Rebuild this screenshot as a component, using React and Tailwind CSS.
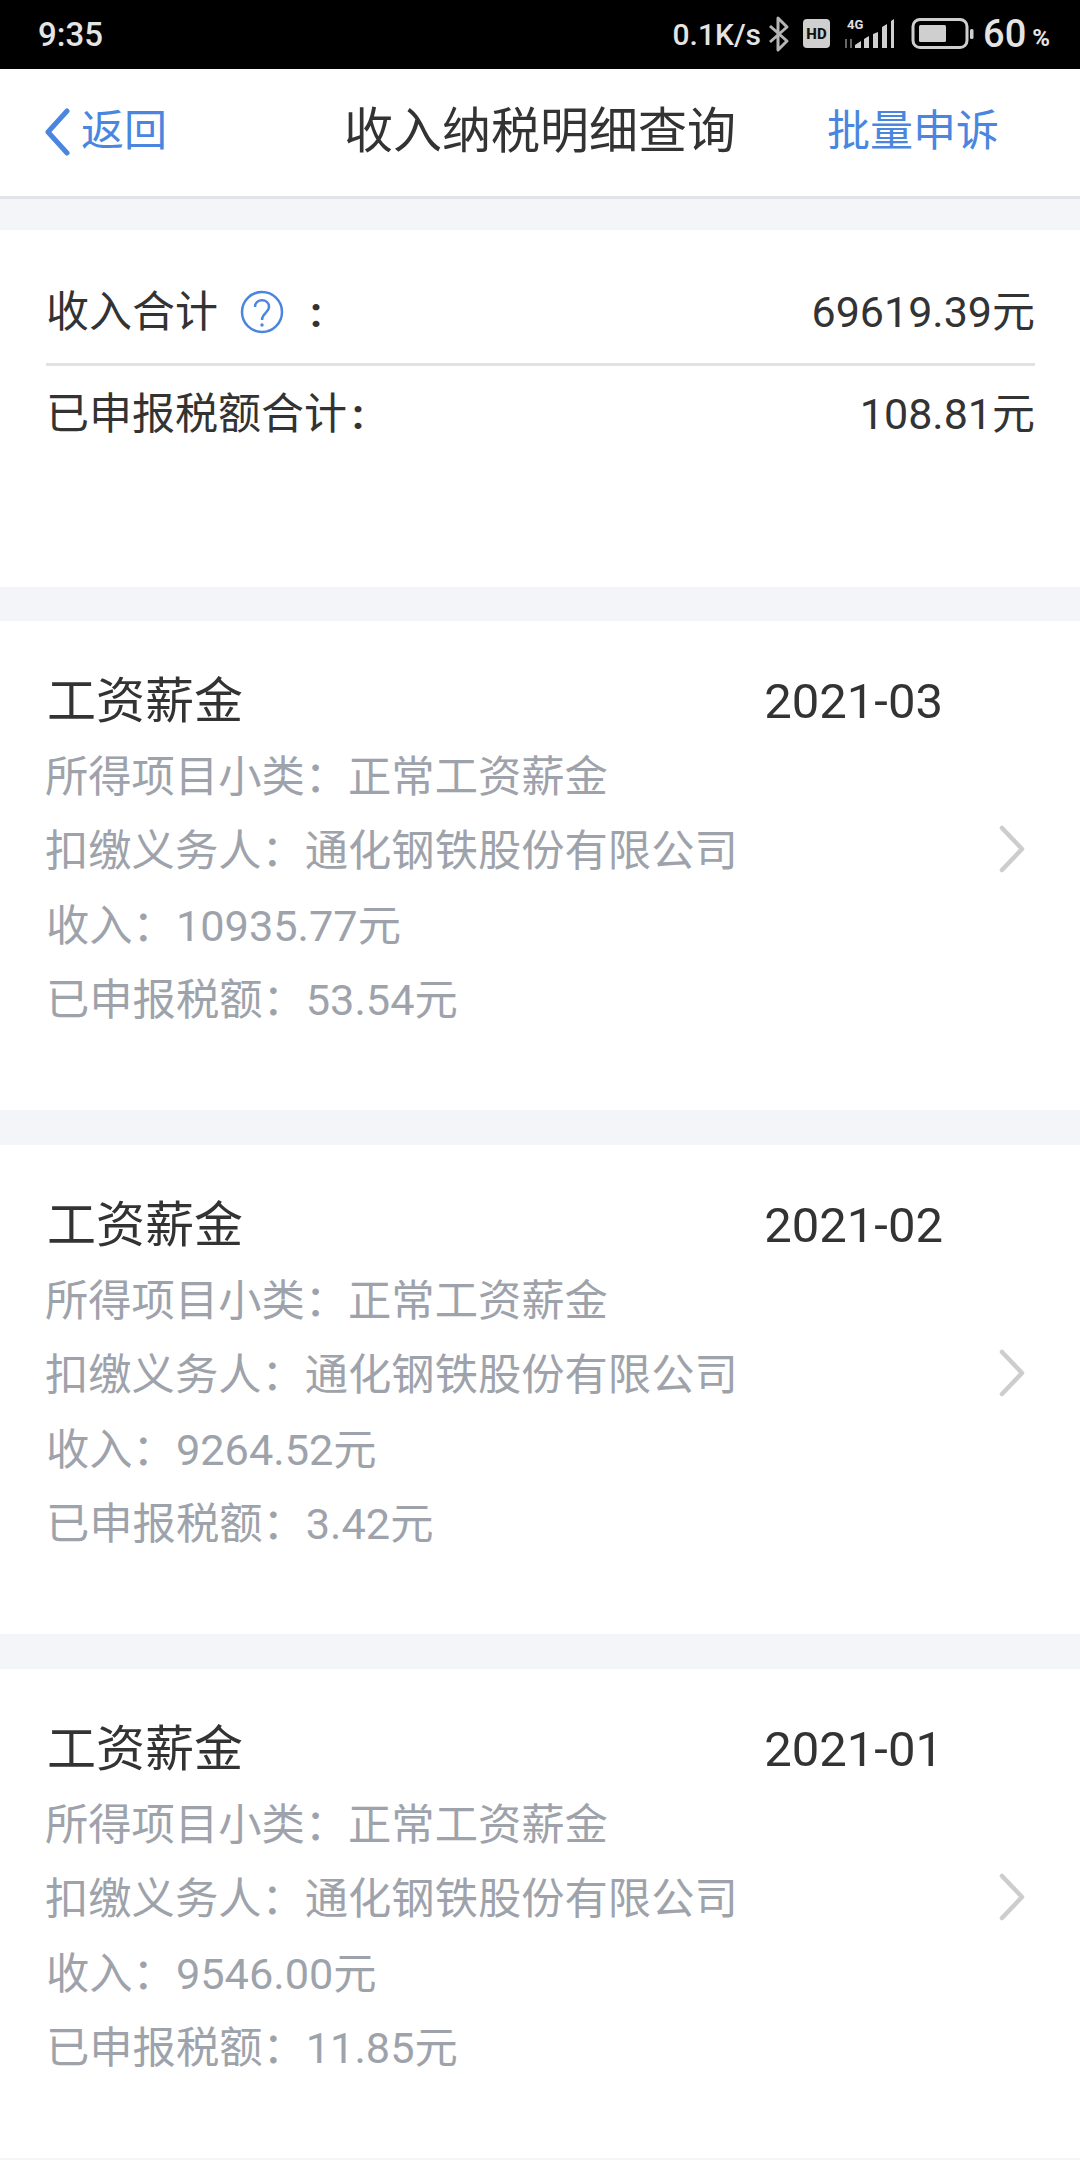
import React from 'react';

const records = [
    { date: '2021-03', income: '10935.77元', tax: '53.54元' },
    { date: '2021-02', income: '9264.52元', tax: '3.42元' },
    { date: '2021-01', income: '9546.00元', tax: '11.85元' },
];

function StatusIcons() {
    return (
        <svg width="212" height="40" viewBox="0 0 212 40" className="block">
            {/* bluetooth */}
            <path d="M3 11 L20 26 L11 35 L11 3 L20 12 L3 27" fill="none" stroke="#b5b5b5" strokeWidth="3" strokeLinejoin="round" />
            {/* HD */}
            <rect x="36" y="4" width="27" height="29" rx="4" fill="#cfcfcf" />
            <text x="49.5" y="24" textAnchor="middle" fontSize="15" fontWeight="800" fontFamily="Roboto" fill="#111">HD</text>
            {/* network */}
            <text x="80" y="14" fontSize="13" fontWeight="700" fontFamily="Roboto" fill="#e0e0e0">4G</text>
            <path d="M79 24v9M84 33v-9" stroke="#666" strokeWidth="2" />
            <path d="M88 33v-3l6-4v7zM97 33v-9l5-3v12zM106 33V19l5-2v16zM115 33V12l5-3v24zM124 33V6l3-2v29z" fill="#cfcfcf" />
            {/* battery */}
            <rect x="146" y="4.5" width="54" height="28" rx="7" fill="none" stroke="#cfcfcf" strokeWidth="3" />
            <rect x="152" y="10" width="27" height="17" rx="1.5" fill="#cfcfcf" />
            <rect x="203" y="14" width="3.5" height="10" rx="1.5" fill="#cfcfcf" />
        </svg>
    );
}

function RecordCard({ record }) {
    return (
        <div className="bg-white h-[489px] flex items-start mb-[35px] pl-[47px]">
            <div className="flex-1">
                <div className="flex justify-between items-center pt-[52px] h-[112px] pr-[55px] text-[#333] text-[49px] leading-[56px]">
                    <span className="mt-[-2px]">工资薪金</span>
                    <span className="mt-[-3px]">{record.date}</span>
                </div>
                <div className="text-[#9ea3ab] text-[43.3px] leading-[74.4px] ml-[-2px] mt-[8px]">
                    <p>所得项目小类：正常工资薪金</p>
                    <p>扣缴义务人：通化钢铁股份有限公司</p>
                    <p className="ml-[1px]">收入：{record.income}</p>
                    <p className="ml-[1px]">已申报税额：{record.tax}</p>
                </div>
            </div>
            <svg width="28" height="50" viewBox="0 0 28 50" className="mt-[203px] mr-[54px]">
                <path d="M4 4 L24 25 L4 46" fill="none" stroke="#cdcdcd" strokeWidth="4.5" strokeLinecap="round" strokeLinejoin="round" />
            </svg>
        </div>
    );
}

export default function App() {
    return (
        <div className="w-[1080px] h-[2160px] overflow-hidden bg-[#f4f5f9] font-['Roboto','Noto_Sans_CJK_SC',sans-serif]">
            <div className="h-[69px] bg-black flex items-center justify-between pl-[38px] pr-[30px] text-[#e4e4e4] text-[33px] font-medium">
                <span className="mt-[1px]">9:35</span>
                <div className="flex items-center">
                    <span className="mr-[6px] text-[30px]">0.1K/s</span>
                    <StatusIcons />
                    <span className="ml-[4px] text-[38px]">60</span>
                    <span className="ml-[6px] mt-[6px] text-[24px] font-bold">%</span>
                </div>
            </div>

            <div className="h-[130px] bg-white border-b-[3px] border-[#e2e4e9] grid grid-cols-[1fr_auto_1fr] items-center pb-[2px]">
                <div className="flex items-center pl-[44px] text-[#4a86e0] text-[43px]">
                    <svg width="26" height="48" viewBox="0 0 26 48">
                        <path d="M23 3 L4 24 L23 45" fill="none" stroke="#4a86e0" strokeWidth="5" strokeLinecap="round" strokeLinejoin="round" />
                    </svg>
                    <span className="ml-[11px]">返回</span>
                </div>
                <div className="text-[#333] text-[49px]">收入纳税明细查询</div>
                <div className="text-right pr-[81px] text-[#4a86e0] text-[43px]">批量申诉</div>
            </div>

            <div className="bg-white h-[357px] mt-[31px] mb-[34px] pl-[46px] pr-[45px] text-[#333] text-[43px]">
                <div className="h-[136px] pt-[31px] border-b-[3px] border-[#e2e2e4] flex items-center justify-between">
                    <div className="flex items-center">
                        <span>收入合计</span>
                        <svg width="44" height="44" viewBox="0 0 44 44" className="ml-[22px]">
                            <circle cx="22" cy="22" r="20" fill="none" stroke="#4a86e0" strokeWidth="2.5" />
                            <path d="M15 17 C15 8 29 8 29 17 C29 23 22 23 22 30" fill="none" stroke="#4a86e0" strokeWidth="2.5" />
                            <circle cx="22" cy="35" r="1.7" fill="#4a86e0" />
                        </svg>
                        <span className="ml-[26px] font-bold">:</span>
                    </div>
                    <span>69619.39元</span>
                </div>
                <div className="flex items-center justify-between h-[96px]">
                    <span>已申报税额合计<span className="ml-[5px] font-bold">:</span></span>
                    <span>108.81元</span>
                </div>
            </div>

            {records.map((record) => (
                <RecordCard key={record.date} record={record} />
            ))}
        </div>
    );
}
